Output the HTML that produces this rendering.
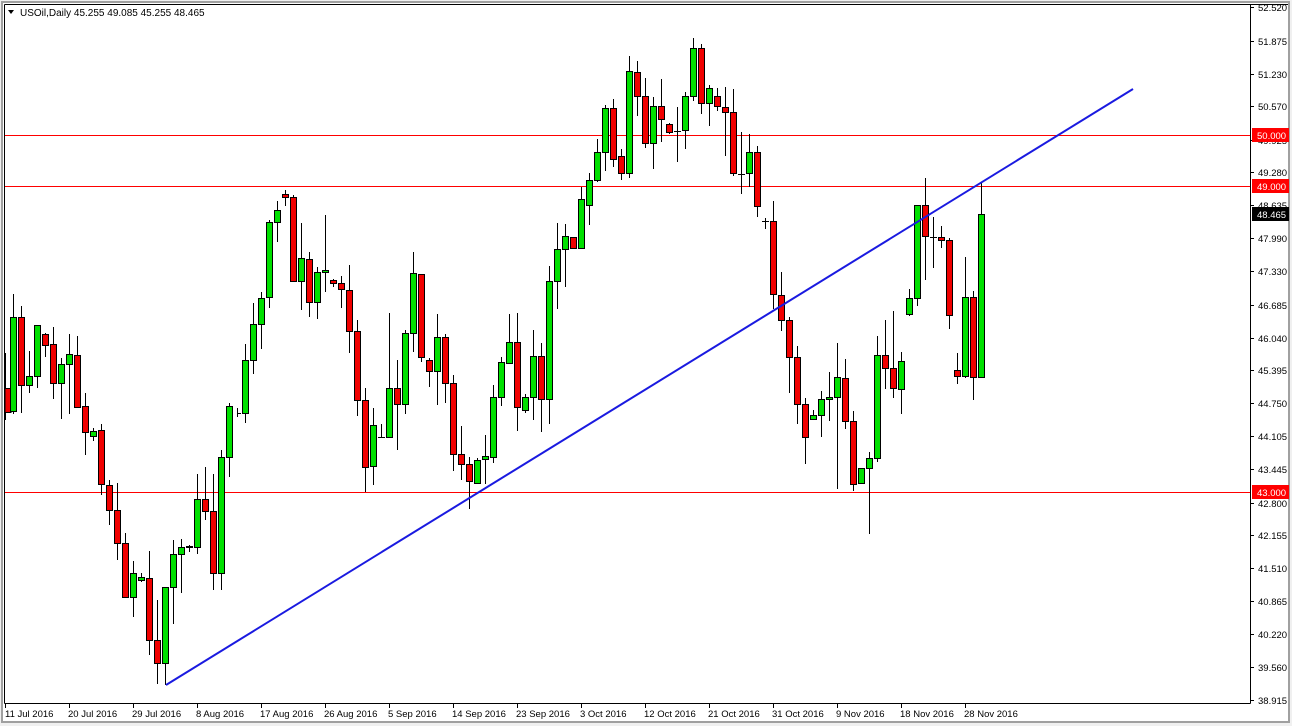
<!DOCTYPE html>
<html><head><meta charset="utf-8"><style>
html,body{margin:0;padding:0;background:#f0f0f0;width:1292px;height:726px;overflow:hidden}
svg{display:block}
text{font-family:"Liberation Sans",sans-serif;font-size:9.5px;fill:#000}
.g{fill:#00e000;stroke:#000;stroke-width:1}
.r{fill:#f00000;stroke:#000;stroke-width:1}
</style></head><body>
<svg width="1292" height="726" viewBox="0 0 1292 726" xmlns="http://www.w3.org/2000/svg">
<rect x="0" y="0" width="1292" height="726" fill="#f0f0f0"/>
<rect x="1" y="1" width="1289" height="722" fill="#a0a0a0"/>
<rect x="3" y="3" width="1285" height="718" fill="#fff"/>
<path d="M4.5,4.5H1288M4.5,4.5V703.5M4.5,703.5H1250.5M1250.5,4.5V703.5" stroke="#000" fill="none"/>
<path d="M5,135.5H1250M5,186.5H1250M5,492.5H1250" stroke="#ff0000" stroke-width="1"/>
<path d="M8,10L14,10L11,14Z" fill="#000"/>
<text x="20" y="16" style="font-size:10px">USOil,Daily  45.255 49.085 45.255 48.465</text>
<path stroke="#000" stroke-width="1" fill="none" d="
M5.5,353V420M13.5,294V414M21.5,306V413M29.5,351V393M37.5,325V388M45.5,333V357M53.5,327V399M61.5,358V419M69.5,334V414M77.5,336V407
M85.5,393V455M93.5,428V441M101.5,424V495M109.5,480V525M117.5,483V560M125.5,533V597M133.5,561V617M141.5,573V582M149.5,551V655M157.5,600V684
M165.5,587V685M173.5,540V624M181.5,539V593M189.5,545V552M197.5,474V554M205.5,467V520M213.5,474V590M221.5,450V590M229.5,403V477M237.5,408V417
M245.5,344V423M253.5,303V374M261.5,292V349M269.5,220V308M277.5,201V242M285.5,190V206M293.5,195V281M301.5,223V310M309.5,252V317M317.5,267V319
M325.5,215V292M333.5,279V287M341.5,276V308M349.5,265V353M357.5,320V416M365.5,388V492M373.5,408V485M381.5,424V437M389.5,313V437M397.5,360V450
M405.5,330V414M413.5,252V352M421.5,274V362M429.5,358V387M437.5,314V405M445.5,334V403M453.5,375V471M461.5,426V480M469.5,457V509M477.5,458V484
M485.5,435V484M493.5,385V463M501.5,357V406M509.5,314V363M517.5,313V431M525.5,394V413M533.5,330V420M541.5,343V432M549.5,266V424M557.5,223V309
M565.5,224V287M573.5,237V248M581.5,187V249M589.5,173V225M597.5,139V182M605.5,105V171M613.5,99V167M621.5,149V180M629.5,56V178M637.5,61V116
M645.5,78V148M653.5,97V169M661.5,79V142M669.5,123V134M677.5,107V162M685.5,92V149M693.5,38V101M701.5,44V114M709.5,85V126M717.5,88V111
M725.5,87V156M733.5,89V176M741.5,132V194M749.5,134V187M757.5,146V217M765.5,218V229M773.5,201V309M781.5,272V331M789.5,317V393M797.5,346V424
M805.5,398V464M813.5,410V420M821.5,391V437M829.5,372V421M837.5,343V489M845.5,359V429M853.5,411V491M861.5,468V483M869.5,452V534M877.5,336V462
M885.5,320V389M893.5,311V398M901.5,352V414M909.5,289V316M917.5,205V306M925.5,178V280M933.5,217V268M941.5,226V248M949.5,238V329M957.5,353V384
M965.5,257V378M973.5,291V400M981.5,183V377
M378,437.5H385M238,413.5H241M674,131.5H681M738,174.5H745M762,221.5H769M930,237.5H937"/>
<g>
<rect class="r" x="5" y="388.5" width="6" height="24"/>
<rect class="g" x="10.5" y="317.5" width="6" height="94"/>
<rect class="r" x="18.5" y="317.5" width="6" height="68"/>
<rect class="g" x="26.5" y="376.5" width="6" height="9"/>
<rect class="g" x="34.5" y="325.5" width="6" height="51"/>
<rect class="r" x="42.5" y="334.5" width="6" height="11"/>
<rect class="r" x="50.5" y="344.5" width="6" height="39"/>
<rect class="g" x="58.5" y="364.5" width="6" height="19"/>
<rect class="g" x="66.5" y="354.5" width="6" height="10"/>
<rect class="r" x="74.5" y="355.5" width="6" height="52"/>
<rect class="r" x="82.5" y="406.5" width="6" height="26"/>
<rect class="g" x="90.5" y="431.5" width="6" height="5"/>
<rect class="r" x="98.5" y="430.5" width="6" height="54"/>
<rect class="r" x="106.5" y="485.5" width="6" height="25"/>
<rect class="r" x="114.5" y="510.5" width="6" height="33"/>
<rect class="r" x="122.5" y="543.5" width="6" height="54"/>
<rect class="g" x="130.5" y="573.5" width="6" height="24"/>
<rect class="g" x="138.5" y="577.5" width="6" height="3"/>
<rect class="r" x="146.5" y="578.5" width="6" height="62"/>
<rect class="r" x="154.5" y="640.5" width="6" height="23"/>
<rect class="g" x="162.5" y="587.5" width="6" height="76"/>
<rect class="g" x="170.5" y="554.5" width="6" height="33"/>
<rect class="g" x="178.5" y="547.5" width="6" height="7"/>
<rect class="g" x="186.5" y="546.5" width="6" height="1"/>
<rect class="g" x="194.5" y="499.5" width="6" height="48"/>
<rect class="r" x="202.5" y="499.5" width="6" height="12"/>
<rect class="r" x="210.5" y="511.5" width="6" height="62"/>
<rect class="g" x="218.5" y="457.5" width="6" height="116"/>
<rect class="g" x="226.5" y="406.5" width="6" height="51"/>
<rect class="g" x="242.5" y="360.5" width="6" height="53"/>
<rect class="g" x="250.5" y="324.5" width="6" height="36"/>
<rect class="g" x="258.5" y="298.5" width="6" height="26"/>
<rect class="g" x="266.5" y="222.5" width="6" height="75"/>
<rect class="g" x="274.5" y="210.5" width="6" height="12"/>
<rect class="r" x="282.5" y="194.5" width="6" height="3"/>
<rect class="r" x="290.5" y="197.5" width="6" height="84"/>
<rect class="g" x="298.5" y="258.5" width="6" height="23"/>
<rect class="r" x="306.5" y="259.5" width="6" height="43"/>
<rect class="g" x="314.5" y="272.5" width="6" height="30"/>
<rect class="g" x="322.5" y="270.5" width="6" height="2"/>
<rect class="r" x="330.5" y="280.5" width="6" height="3"/>
<rect class="r" x="338.5" y="283.5" width="6" height="6"/>
<rect class="r" x="346.5" y="290.5" width="6" height="41"/>
<rect class="r" x="354.5" y="331.5" width="6" height="69"/>
<rect class="r" x="362.5" y="400.5" width="6" height="67"/>
<rect class="g" x="370.5" y="425.5" width="6" height="41"/>
<rect class="g" x="386.5" y="388.5" width="6" height="49"/>
<rect class="r" x="394.5" y="388.5" width="6" height="16"/>
<rect class="g" x="402.5" y="333.5" width="6" height="71"/>
<rect class="g" x="410.5" y="273.5" width="6" height="60"/>
<rect class="r" x="418.5" y="274.5" width="6" height="83"/>
<rect class="r" x="426.5" y="360.5" width="6" height="11"/>
<rect class="g" x="434.5" y="337.5" width="6" height="34"/>
<rect class="r" x="442.5" y="337.5" width="6" height="46"/>
<rect class="r" x="450.5" y="383.5" width="6" height="71"/>
<rect class="r" x="458.5" y="454.5" width="6" height="10"/>
<rect class="r" x="466.5" y="464.5" width="6" height="17"/>
<rect class="g" x="474.5" y="460.5" width="6" height="23"/>
<rect class="g" x="482.5" y="456.5" width="6" height="3"/>
<rect class="g" x="490.5" y="397.5" width="6" height="60"/>
<rect class="g" x="498.5" y="362.5" width="6" height="35"/>
<rect class="g" x="506.5" y="342.5" width="6" height="21"/>
<rect class="r" x="514.5" y="342.5" width="6" height="65"/>
<rect class="g" x="522.5" y="397.5" width="6" height="13"/>
<rect class="g" x="530.5" y="356.5" width="6" height="41"/>
<rect class="r" x="538.5" y="356.5" width="6" height="43"/>
<rect class="g" x="546.5" y="281.5" width="6" height="118"/>
<rect class="g" x="554.5" y="249.5" width="6" height="32"/>
<rect class="g" x="562.5" y="236.5" width="6" height="13"/>
<rect class="r" x="570.5" y="237.5" width="6" height="11"/>
<rect class="g" x="578.5" y="199.5" width="6" height="49"/>
<rect class="g" x="586.5" y="180.5" width="6" height="25"/>
<rect class="g" x="594.5" y="152.5" width="6" height="28"/>
<rect class="g" x="602.5" y="108.5" width="6" height="44"/>
<rect class="r" x="610.5" y="108.5" width="6" height="51"/>
<rect class="r" x="618.5" y="156.5" width="6" height="17"/>
<rect class="g" x="626.5" y="71.5" width="6" height="102"/>
<rect class="r" x="634.5" y="72.5" width="6" height="24"/>
<rect class="r" x="642.5" y="96.5" width="6" height="47"/>
<rect class="g" x="650.5" y="106.5" width="6" height="37"/>
<rect class="r" x="658.5" y="106.5" width="6" height="13"/>
<rect class="r" x="666.5" y="124.5" width="6" height="8"/>
<rect class="g" x="682.5" y="96.5" width="6" height="34"/>
<rect class="g" x="690.5" y="48.5" width="6" height="48"/>
<rect class="r" x="698.5" y="48.5" width="6" height="55"/>
<rect class="g" x="706.5" y="88.5" width="6" height="15"/>
<rect class="r" x="714.5" y="96.5" width="6" height="10"/>
<rect class="r" x="722.5" y="107.5" width="6" height="5"/>
<rect class="r" x="730.5" y="112.5" width="6" height="61"/>
<rect class="g" x="746.5" y="152.5" width="6" height="21"/>
<rect class="r" x="754.5" y="152.5" width="6" height="54"/>
<rect class="r" x="770.5" y="221.5" width="6" height="73"/>
<rect class="r" x="778.5" y="295.5" width="6" height="25"/>
<rect class="r" x="786.5" y="320.5" width="6" height="37"/>
<rect class="r" x="794.5" y="357.5" width="6" height="47"/>
<rect class="r" x="802.5" y="404.5" width="6" height="33"/>
<rect class="g" x="810.5" y="415.5" width="6" height="4"/>
<rect class="g" x="818.5" y="399.5" width="6" height="16"/>
<rect class="g" x="826.5" y="397.5" width="6" height="2"/>
<rect class="g" x="834.5" y="377.5" width="6" height="20"/>
<rect class="r" x="842.5" y="378.5" width="6" height="43"/>
<rect class="r" x="850.5" y="421.5" width="6" height="63"/>
<rect class="g" x="858.5" y="468.5" width="6" height="15"/>
<rect class="g" x="866.5" y="458.5" width="6" height="10"/>
<rect class="g" x="874.5" y="355.5" width="6" height="103"/>
<rect class="r" x="882.5" y="355.5" width="6" height="13"/>
<rect class="r" x="890.5" y="368.5" width="6" height="20"/>
<rect class="g" x="898.5" y="361.5" width="6" height="28"/>
<rect class="g" x="906.5" y="298.5" width="6" height="16"/>
<rect class="g" x="914.5" y="205.5" width="6" height="93"/>
<rect class="r" x="922.5" y="205.5" width="6" height="31"/>
<rect class="r" x="938.5" y="237.5" width="6" height="3"/>
<rect class="r" x="946.5" y="240.5" width="6" height="75"/>
<rect class="r" x="954.5" y="370.5" width="6" height="6"/>
<rect class="g" x="962.5" y="297.5" width="6" height="79"/>
<rect class="r" x="970.5" y="297.5" width="6" height="80"/>
<rect class="g" x="978.5" y="214.5" width="6" height="163"/>
</g>
<line x1="166" y1="685" x2="1133" y2="89" stroke="#1a1ae0" stroke-width="2"/>
<path stroke="#000" d="M1250,7.5H1254M1250,41.5H1254M1250,74.5H1254M1250,106.5H1254M1250,140.5H1254M1250,172.5H1254M1250,205.5H1254M1250,238.5H1254M1250,271.5H1254M1250,305.5H1254M1250,338.5H1254M1250,370.5H1254M1250,403.5H1254M1250,436.5H1254M1250,469.5H1254M1250,503.5H1254M1250,535.5H1254M1250,568.5H1254M1250,601.5H1254M1250,634.5H1254M1250,667.5H1254M1250,700.5H1254"/>
<g>
<text x="1258" y="11">52.520</text>
<text x="1258" y="45">51.875</text>
<text x="1258" y="78">51.230</text>
<text x="1258" y="110">50.570</text>
<text x="1258" y="144">49.925</text>
<text x="1258" y="176">49.280</text>
<text x="1258" y="209">48.635</text>
<text x="1258" y="242">47.990</text>
<text x="1258" y="275">47.330</text>
<text x="1258" y="309">46.685</text>
<text x="1258" y="342">46.040</text>
<text x="1258" y="374">45.395</text>
<text x="1258" y="407">44.750</text>
<text x="1258" y="440">44.105</text>
<text x="1258" y="473">43.445</text>
<text x="1258" y="507">42.800</text>
<text x="1258" y="539">42.155</text>
<text x="1258" y="572">41.510</text>
<text x="1258" y="605">40.865</text>
<text x="1258" y="638">40.220</text>
<text x="1258" y="671">39.560</text>
<text x="1258" y="704">38.915</text>
</g>
<rect x="1252" y="128" width="37" height="14" fill="#ff0000"/>
<text x="1257" y="139" style="fill:#fff">50.000</text>
<rect x="1252" y="179" width="37" height="14" fill="#ff0000"/>
<text x="1257" y="190" style="fill:#fff">49.000</text>
<rect x="1252" y="207" width="37" height="14" fill="#000"/>
<text x="1257" y="218" style="fill:#fff">48.465</text>
<rect x="1252" y="485" width="37" height="14" fill="#ff0000"/>
<text x="1257" y="496" style="fill:#fff">43.000</text>
<path stroke="#000" d="M5.5,703V708M69.5,703V708M133.5,703V708M197.5,703V708M261.5,703V708M325.5,703V708M389.5,703V708M453.5,703V708M517.5,703V708M581.5,703V708M645.5,703V708M709.5,703V708M773.5,703V708M837.5,703V708M901.5,703V708M965.5,703V708"/>
<g>
<text x="5" y="717">11 Jul 2016</text>
<text x="68" y="717">20 Jul 2016</text>
<text x="132" y="717">29 Jul 2016</text>
<text x="196" y="717">8 Aug 2016</text>
<text x="260" y="717">17 Aug 2016</text>
<text x="324" y="717">26 Aug 2016</text>
<text x="388" y="717">5 Sep 2016</text>
<text x="452" y="717">14 Sep 2016</text>
<text x="516" y="717">23 Sep 2016</text>
<text x="580" y="717">3 Oct 2016</text>
<text x="644" y="717">12 Oct 2016</text>
<text x="708" y="717">21 Oct 2016</text>
<text x="772" y="717">31 Oct 2016</text>
<text x="836" y="717">9 Nov 2016</text>
<text x="900" y="717">18 Nov 2016</text>
<text x="964" y="717">28 Nov 2016</text>
</g>
</svg>
</body></html>
